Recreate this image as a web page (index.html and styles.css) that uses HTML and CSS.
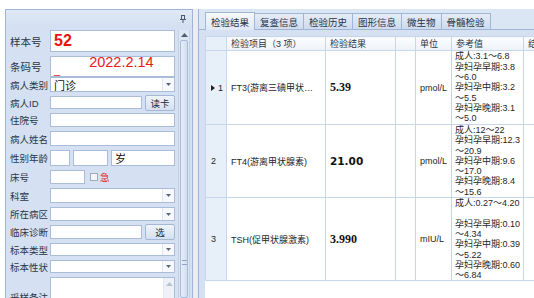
FILE: index.html
```html
<!DOCTYPE html>
<html lang="zh-CN">
<head>
    <meta charset="UTF-8">
    <meta name="viewport" content="width=device-width, initial-scale=1.0">
    <title>检验结果</title>
<link rel="stylesheet" href="styles.css">
</head>
<body>
<div class="window">
    <aside class="side">
        <div class="side-head">
            <svg class="pin" width="6" height="8" viewBox="0 0 6 8">
                <rect x="1.5" y="0.5" width="3" height="4" fill="none" stroke="#4a5870"/>
                <line x1="0" y1="4.5" x2="6" y2="4.5" stroke="#4a5870"/>
                <line x1="3" y1="5" x2="3" y2="8" stroke="#4a5870"/>
            </svg>
        </div>
        <div class="side-body">
            <div class="form">
                <div class="row row-22">
                    <span class="label label-big">样本号</span>
                    <div class="field"><span class="sample-no">52</span></div>
                </div>
                <div class="row row-21 row-tight">
                    <span class="label label-big">条码号</span>
                    <div class="field field-barcode"><span class="caret">_</span><span class="barcode-date">2022.2.14</span></div>
                </div>
                <div class="row row-15">
                    <span class="label">病人类别</span>
                    <div class="field combo"><span class="combo-text">门诊</span><span class="combo-btn"><svg width="5" height="3" viewBox="0 0 5 3"><path d="M0 0h5L2.5 3z" fill="#5a6678"/></svg></span></div>
                </div>
                <div class="row row-13">
                    <span class="label">病人ID</span>
                    <div class="field"></div>
                    <span class="btn">读卡</span>
                </div>
                <div class="row">
                    <span class="label">住院号</span>
                    <div class="field"></div>
                </div>
                <div class="row row-15">
                    <span class="label">病人姓名</span>
                    <div class="field"></div>
                </div>
                <div class="row row-16">
                    <span class="label">性别年龄</span>
                    <div class="field field-sex"></div>
                    <div class="field field-age"></div>
                    <div class="field field-unit"><span class="unit-text">岁</span></div>
                </div>
                <div class="row">
                    <span class="label">床号</span>
                    <div class="field field-bed"></div>
                    <span class="check"></span>
                    <span class="urgent">急</span>
                </div>
                <div class="row row-15">
                    <span class="label">科室</span>
                    <div class="field combo"><span class="combo-text"></span><span class="combo-btn"><svg width="5" height="3" viewBox="0 0 5 3"><path d="M0 0h5L2.5 3z" fill="#5a6678"/></svg></span></div>
                </div>
                <div class="row">
                    <span class="label">所在病区</span>
                    <div class="field combo"><span class="combo-text"></span><span class="combo-btn"><svg width="5" height="3" viewBox="0 0 5 3"><path d="M0 0h5L2.5 3z" fill="#5a6678"/></svg></span></div>
                </div>
                <div class="row">
                    <span class="label">临床诊断</span>
                    <div class="field"></div>
                    <span class="btn">选</span>
                </div>
                <div class="row row-13">
                    <span class="label">标本类型</span>
                    <div class="field combo"><span class="combo-text"></span><span class="combo-btn"><svg width="5" height="3" viewBox="0 0 5 3"><path d="M0 0h5L2.5 3z" fill="#5a6678"/></svg></span></div>
                </div>
                <div class="row row-13">
                    <span class="label">标本性状</span>
                    <div class="field combo"><span class="combo-text"></span><span class="combo-btn"><svg width="5" height="3" viewBox="0 0 5 3"><path d="M0 0h5L2.5 3z" fill="#5a6678"/></svg></span></div>
                </div>
                <div class="row row-memo">
                    <span class="label">采样备注</span>
                    <div class="field memo">
                        <div class="memo-scroll"><svg width="7" height="4" viewBox="0 0 7 4"><path d="M0 4h7L3.5 0z" fill="#b9c4d2"/></svg></div>
                    </div>
                </div>
            </div>
            <div class="vscroll">
                <span class="vs-up"><svg width="7" height="4" viewBox="0 0 7 4"><path d="M0 4h7L3.5 0z" fill="#4f5d72"/></svg></span>
                <div class="vs-thumb"><span class="grip"></span></div>
            </div>
        </div>
    </aside>

    <div class="splitter"></div>

    <section class="main">
        <div class="tabs">
            <span class="tab tab-active">检验结果</span>
            <span class="tab">复查信息</span>
            <span class="tab">检验历史</span>
            <span class="tab">图形信息</span>
            <span class="tab">微生物</span>
            <span class="tab">骨髓检验</span>
        </div>
        <div class="tab-page">
            <div class="grid-wrap">
                <table class="grid">
                    <colgroup>
                        <col class="c-ind">
                        <col class="c-item">
                        <col class="c-val">
                        <col class="c-flag">
                        <col class="c-unit">
                        <col class="c-ref">
                        <col class="c-more">
                    </colgroup>
                    <thead>
                        <tr>
                            <th class="ind"></th>
                            <th>检验项目（3 项）</th>
                            <th>检验结果</th>
                            <th></th>
                            <th>单位</th>
                            <th>参考值</th>
                            <th>结果提示</th>
                        </tr>
                    </thead>
                    <tbody>
                        <tr class="r1">
                            <td class="ind"><span class="cur"><svg width="4" height="6" viewBox="0 0 4 6"><path d="M0 0l4 3-4 3z" fill="#222"/></svg></span>1</td>
                            <td class="item">FT3(游离三碘甲状腺原氨酸)</td>
                            <td><span class="val val-serif">5.39</span></td>
                            <td></td>
                            <td>pmol/L</td>
                            <td class="ref">成人:3.1～6.8<br>孕妇孕早期:3.8<br>～6.0<br>孕妇孕中期:3.2<br>～5.5<br>孕妇孕晚期:3.1<br>～5.0</td>
                            <td></td>
                        </tr>
                        <tr class="r2">
                            <td class="ind">2</td>
                            <td class="item">FT4(游离甲状腺素)</td>
                            <td><span class="val val-sans">21.00</span></td>
                            <td></td>
                            <td>pmol/L</td>
                            <td class="ref">成人:12～22<br>孕妇孕早期:12.3<br>～20.9<br>孕妇孕中期:9.6<br>～17.0<br>孕妇孕晚期:8.4<br>～15.6</td>
                            <td></td>
                        </tr>
                        <tr class="r3">
                            <td class="ind">3</td>
                            <td class="item">TSH(促甲状腺激素)</td>
                            <td><span class="val val-serif">3.990</span></td>
                            <td></td>
                            <td>mIU/L</td>
                            <td class="ref">成人:0.27～4.20<br><br>孕妇孕早期:0.10<br>～4.34<br>孕妇孕中期:0.39<br>～5.22<br>孕妇孕晚期:0.60<br>～6.84</td>
                            <td></td>
                        </tr>
                    </tbody>
                </table>
            </div>
        </div>
    </section>
</div>
</body>
</html>
```

FILE: styles.css
```css
body {
  margin: 0;
  background: #fff;
  font-family: "Liberation Sans", "Noto Sans CJK SC", sans-serif;
  font-size: 9px;
  color: #1f2733;
  overflow: hidden;
}

.window {
  display: flex;
  height: 289px;
  margin-top: 9px;
  padding-left: 5px;
}

/* left form panel */
.side {
  width: 188px;
  box-sizing: border-box;
  border: 1px solid #9fb5d3;
  border-bottom: none;
  background: #d5e1f2;
  display: flex;
  flex-direction: column;
  flex-shrink: 0;
}

.side-head {
  height: 18px;
  display: flex;
  justify-content: flex-end;
  align-items: center;
  padding-right: 6px;
  background: linear-gradient(#dfe9f6, #d3e0f1);
}

.side-body {
  flex: 1;
  display: flex;
  gap: 3px;
  padding: 2px 2px 0 4px;
  overflow: hidden;
}

.form {
  width: 165px;
  display: flex;
  flex-direction: column;
  flex-shrink: 0;
}

.row {
  display: flex;
  align-items: center;
  height: 14px;
  margin-bottom: 4px;
  flex-shrink: 0;
}
.row-13 { height: 13px; }
.row-15 { height: 15px; }
.row-16 { height: 16px; }
.row-21 { height: 21px; }
.row-22 { height: 22px; }
.row-memo { height: 40px; }
.row-tight { margin-bottom: 0; }

.label {
  width: 40px;
  flex-shrink: 0;
  font-size: 9.5px;
  color: #2a3548;
  white-space: nowrap;
}

.label-big {
  font-size: 10.5px;
}

.field {
  flex: 1;
  height: 100%;
  box-sizing: border-box;
  background: #fff;
  border: 1px solid #a9bdd8;
  display: flex;
  align-items: center;
  padding-left: 3px;
  min-width: 0;
}

.sample-no {
  color: #e8140f;
  font-weight: bold;
  font-size: 16px;
}

.field-barcode {
  align-items: stretch;
}

.caret {
  color: #e8140f;
  font-size: 11px;
  line-height: 11px;
  align-self: flex-end;
}

.barcode-date {
  color: #ec1a12;
  font-size: 14.5px;
  line-height: 14px;
  margin-left: 29px;
  margin-top: -2px;
  align-self: flex-start;
}

.combo {
  padding-right: 0;
}

.combo-text {
  flex: 1;
  font-size: 11px;
  color: #111;
}

.combo-btn {
  width: 11px;
  height: 100%;
  border-left: 1px solid #e1e7ef;
  background: #f7f9fc;
  display: flex;
  align-items: center;
  justify-content: center;
}

.btn {
  width: 30px;
  height: 16px;
  margin-left: 3px;
  box-sizing: border-box;
  border: 1px solid #a3b8d5;
  border-radius: 2px;
  background: linear-gradient(#eef3fa, #d4e0f0);
  display: flex;
  align-items: center;
  justify-content: center;
  font-size: 9.5px;
  color: #1f2733;
  flex-shrink: 0;
}

.field-sex {
  flex: none;
  width: 20px;
}

.field-age {
  flex: none;
  width: 35px;
  margin-left: 3px;
}

.field-unit {
  margin-left: 3px;
}

.unit-text {
  font-size: 11px;
  color: #111;
}

.field-bed {
  flex: none;
  width: 35px;
}

.check {
  width: 6px;
  height: 6px;
  margin-left: 5px;
  border: 1px solid #a2acb9;
  background: #f3f5f8;
}

.urgent {
  color: #e8140f;
  font-size: 9.5px;
  margin-left: 2px;
}

.memo {
  align-items: stretch;
  justify-content: flex-end;
  padding-left: 0;
}

.memo-scroll {
  width: 11px;
  background: #eef2f7;
  border-left: 1px solid #e3e8ef;
  display: flex;
  justify-content: center;
  padding-top: 4px;
  box-sizing: border-box;
}

.vscroll {
  width: 12px;
  flex-shrink: 0;
  display: flex;
  flex-direction: column;
  background: #dde6f3;
  border-left: 1px solid #c4d2e6;
  border-right: 1px solid #c4d2e6;
  box-sizing: border-box;
}

.vs-up {
  height: 10px;
  display: flex;
  align-items: center;
  justify-content: center;
  flex-shrink: 0;
}

.vs-thumb {
  flex: 1;
  margin: 0 1px;
  border: 1px solid #a6bbd7;
  border-radius: 2px;
  background: linear-gradient(90deg, #e6eef8, #d2def0);
  display: flex;
  justify-content: center;
}

.grip {
  width: 5px;
  height: 3px;
  margin-top: 219px;
  border-top: 1px solid #8ea4c2;
  border-bottom: 1px solid #8ea4c2;
}

.splitter {
  width: 5px;
  flex-shrink: 0;
  background: #eaeef4;
}

/* right side: tabs + result grid */
.main {
  flex: 1;
  min-width: 0;
  display: flex;
  flex-direction: column;
  background: #d5e1f2;
  border-left: 1px solid #9fb5d3;
}

.tabs {
  height: 21px;
  box-sizing: border-box;
  display: flex;
  align-items: flex-end;
  padding-left: 6px;
  background: #dbe6f4;
  border-bottom: 1px solid #9fb5d3;
  flex-shrink: 0;
}

.tab {
  height: 16px;
  box-sizing: border-box;
  padding: 0 5px;
  margin-right: -1px;
  border: 1px solid #9fb6d5;
  border-bottom: none;
  background: linear-gradient(#e4ecf7, #cedbee);
  display: flex;
  align-items: center;
  font-size: 9.5px;
  color: #26344a;
  white-space: nowrap;
}

.tab-active {
  height: 18px;
  margin-bottom: -1px;
  background: linear-gradient(#f6f9fd, #dfe8f5);
}

.tab-page {
  flex: 1;
  padding: 6px 0 0 6px;
  overflow: hidden;
}

.grid-wrap {
  height: 100%;
  background: #fff;
  overflow: hidden;
}

.grid {
  border-collapse: collapse;
  table-layout: fixed;
  width: 380px;
}

.c-ind { width: 21px; }
.c-item { width: 99px; }
.c-val { width: 70px; }
.c-flag { width: 20px; }
.c-unit { width: 36px; }
.c-ref { width: 72px; }
.c-more { width: 62px; }

.grid th,
.grid td {
  border: 1px solid #c6d6eb;
  padding: 0 4px;
  text-align: left;
  white-space: nowrap;
  overflow: hidden;
  font-weight: normal;
  font-size: 9px;
  color: #1f1f1f;
}

.grid th {
  height: 13px;
  background: linear-gradient(#fbfcfe, #eef3f9);
  color: #2a3548;
}

.grid .ind {
  background: #e7eff9;
  padding-left: 5px;
}

.cur {
  display: inline-block;
  margin-right: 3px;
}

.r1 td { height: 73px; }
.r2 td { height: 71px; }
.r3 td { height: 81px; }

.item {
  text-overflow: ellipsis;
}

.val {
  font-weight: bold;
  font-size: 11.5px;
  color: #111;
}

.val-serif {
  font-family: "Liberation Serif", serif;
  font-size: 12px;
}

.val-sans {
  font-family: "DejaVu Sans", sans-serif;
  font-size: 10.5px;
}

.grid .ref {
  line-height: 10.3px;
  padding: 0 3px;
}
```
